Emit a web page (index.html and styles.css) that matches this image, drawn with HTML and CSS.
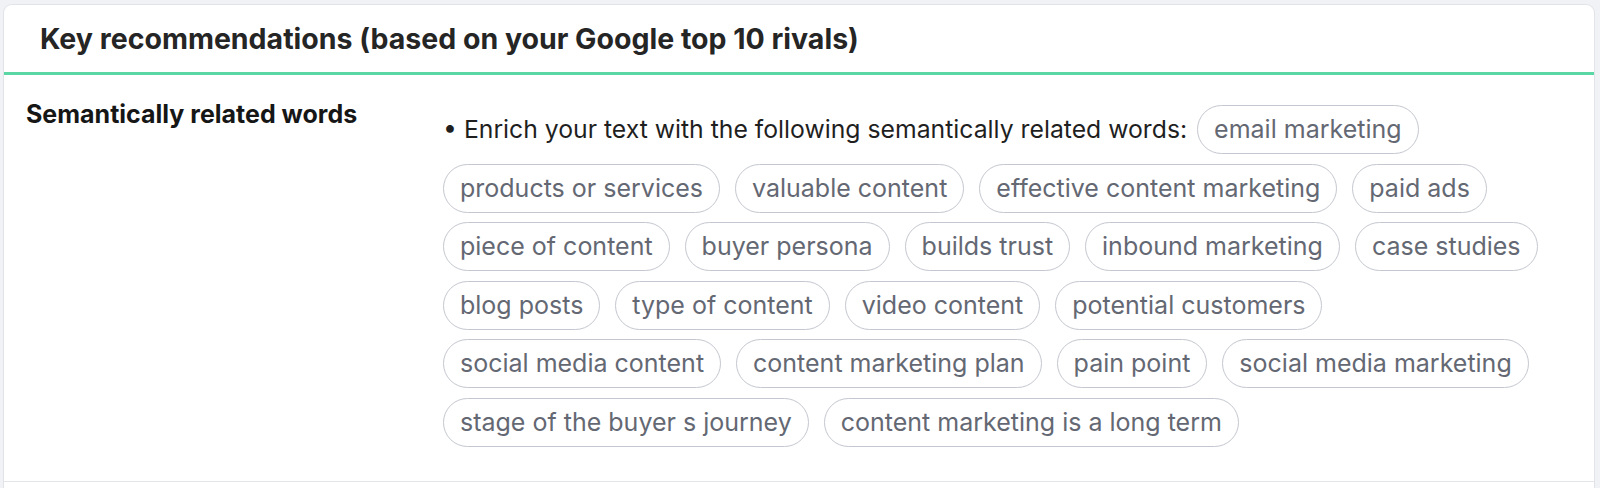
FILE: index.html
```html
<!DOCTYPE html>
<html lang="en">
<head>
<meta charset="utf-8">
<title>Key recommendations</title>
<link rel="stylesheet" href="styles.css">
</head>
<body>
<div class="page">
  <section class="card">
    <header class="card-head">
      <h2 class="card-title">Key recommendations (based on your Google top 10 rivals)</h2>
    </header>
    <div class="rec-row">
      <div class="rec-label">Semantically related words</div>
      <div class="rec-body">
        <span class="rec-text">• Enrich your text with the following semantically related words:</span>
        <span class="chip">email marketing</span>
        <span class="chip">products or services</span>
        <span class="chip">valuable content</span>
        <span class="chip">effective content marketing</span>
        <span class="chip">paid ads</span>
        <span class="chip">piece of content</span>
        <span class="chip">buyer persona</span>
        <span class="chip">builds trust</span>
        <span class="chip">inbound marketing</span>
        <span class="chip">case studies</span>
        <span class="chip">blog posts</span>
        <span class="chip">type of content</span>
        <span class="chip">video content</span>
        <span class="chip">potential customers</span>
        <span class="chip">social media content</span>
        <span class="chip">content marketing plan</span>
        <span class="chip">pain point</span>
        <span class="chip">social media marketing</span>
        <span class="chip">stage of the buyer s journey</span>
        <span class="chip">content marketing is a long term</span>
      </div>
    </div>
    <div class="rec-row rec-row-next"></div>
  </section>
</div>
</body>
</html>
```

FILE: styles.css
```css
html, body {
  margin: 0;
  padding: 0;
  background: #f0f2f5;
  font-family: Inter, "Noto Sans", "Liberation Sans", sans-serif;
  color: #1f1f1f;
}

.page {
  padding: 4px 5px 0 3px;
}

.card {
  background: #ffffff;
  border: 1px solid #e0e3e8;
  border-bottom: none;
  border-radius: 9px 9px 0 0;
}

.card-head {
  height: 67px;
  display: flex;
  align-items: center;
  padding: 0 0 0 36px;
  border-bottom: 3px solid #5ad7a4;
}

.card-title {
  margin: 0;
  font-size: 28.5px;
  line-height: 34px;
  font-weight: 700;
  color: #252525;
}

.rec-row {
  display: grid;
  grid-template-columns: 417px 1fr;
  padding: 25px 24px 34px 22px;
  border-bottom: 1px solid #e3e5ea;
}

.rec-row-next {
  padding: 0;
  height: 10px;
  border-bottom: none;
}

.rec-label {
  font-size: 25px;
  line-height: 29px;
  font-weight: 700;
  color: #161616;
}

.rec-body {
  margin-top: 5px;
  display: flex;
  flex-wrap: wrap;
  align-items: baseline;
  gap: 9.5px 15px;
}

.rec-text {
  font-size: 24.75px;
  line-height: 29px;
  color: #1f1f1f;
  margin-right: -5px;
}

.chip {
  display: inline-block;
  font-size: 25px;
  line-height: 29px;
  padding: 9px 16px;
  border: 1px solid #c4c7cf;
  border-radius: 25px;
  color: #646873;
  white-space: nowrap;
}
```
